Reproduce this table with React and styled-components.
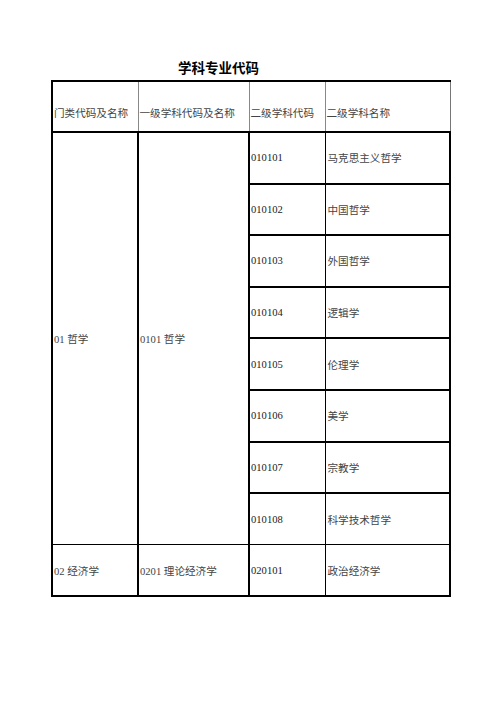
import React from "react";
import styled, { createGlobalStyle } from "styled-components";

const GlobalStyle = createGlobalStyle`
  html, body {
    margin: 0;
    padding: 0;
    background: #fff;
  }
  body {
    font-family: "Liberation Serif", "Noto Sans CJK SC", serif;
  }
`;

const Page = styled.div`
  width: 496px;
  height: 702px;
  padding-top: 58px;
  box-sizing: border-box;
`;

const Title = styled.h1`
  margin: 0 0 0 178px;
  height: 22px;
  font-family: "Noto Sans CJK SC", sans-serif;
  font-size: 13.5px;
  line-height: 18px;
  font-weight: 700;
  color: #000;
  letter-spacing: 0;
`;

const Table = styled.table`
  margin-left: 51px;
  border-collapse: collapse;
  table-layout: fixed;
  width: 398px;
  font-size: 10.6px;
  color: #333;
`;

const HeadCell = styled.th`
  height: 51px;
  padding: 11px 0 0 1px;
  box-sizing: border-box;
  text-align: left;
  font-weight: 400;
  font-family: "Noto Sans CJK SC", sans-serif;
  color: #444;
  border-top: 2px solid #000;
  border-bottom: 2px solid #000;
  border-left: ${(p) => (p.$first ? "2px solid #000" : "1px solid #888")};
  border-right: ${(p) => (p.$last ? "1px solid #777" : "1px solid #888")};
`;

const Cell = styled.td`
  height: 51.6px;
  padding: 0 0 0 1px;
  box-sizing: border-box;
  vertical-align: middle;
  text-align: left;
  white-space: nowrap;
  font-family: ${(p) =>
    p.$code ? '"Liberation Serif", serif' : '"Liberation Serif", "Noto Sans CJK SC", sans-serif'};
  color: ${(p) => (p.$code ? "#222" : "#444")};
  border-left: ${(p) => p.$left || "2px solid #000"};
  border-right: ${(p) => p.$right || "2px solid #000"};
  border-top: ${(p) => p.$top || "2px solid #000"};
  border-bottom: ${(p) => p.$bottom || "2px solid #000"};
`;

const NameText = styled.span`
  padding-left: 1px;
`;

const philosophy = [
  ["010101", "马克思主义哲学"],
  ["010102", "中国哲学"],
  ["010103", "外国哲学"],
  ["010104", "逻辑学"],
  ["010105", "伦理学"],
  ["010106", "美学"],
  ["010107", "宗教学"],
  ["010108", "科学技术哲学"],
];

export default function App() {
  return (
    <>
      <GlobalStyle />
      <Page>
        <Title>学科专业代码</Title>
        <Table>
          <colgroup>
            <col style={{ width: 86 }} />
            <col style={{ width: 111 }} />
            <col style={{ width: 76 }} />
            <col style={{ width: 125 }} />
          </colgroup>
          <thead>
            <tr>
              <HeadCell $first>门类代码及名称</HeadCell>
              <HeadCell>一级学科代码及名称</HeadCell>
              <HeadCell>二级学科代码</HeadCell>
              <HeadCell $last>二级学科名称</HeadCell>
            </tr>
          </thead>
          <tbody>
            {philosophy.map(([code, name], i) => (
              <tr key={code}>
                {i === 0 && (
                  <>
                    <Cell rowSpan={8} $bottom="1px solid #000">
                      01 哲学
                    </Cell>
                    <Cell rowSpan={8} $bottom="1px solid #000">
                      0101 哲学
                    </Cell>
                  </>
                )}
                <Cell
                  $code
                  $right="1px solid #000"
                  $bottom={i === 7 ? "1px solid #000" : undefined}
                >
                  {code}
                </Cell>
                <Cell
                  $left="1px solid #000"
                  $bottom={i === 7 ? "1px solid #000" : undefined}
                >
                  <NameText>{name}</NameText>
                </Cell>
              </tr>
            ))}
            <tr>
              <Cell $top="1px solid #000">02 经济学</Cell>
              <Cell $top="1px solid #000">0201 理论经济学</Cell>
              <Cell $code $top="1px solid #000" $right="1px solid #000">
                020101
              </Cell>
              <Cell $top="1px solid #000" $left="1px solid #000">
                <NameText>政治经济学</NameText>
              </Cell>
            </tr>
          </tbody>
        </Table>
      </Page>
    </>
  );
}
